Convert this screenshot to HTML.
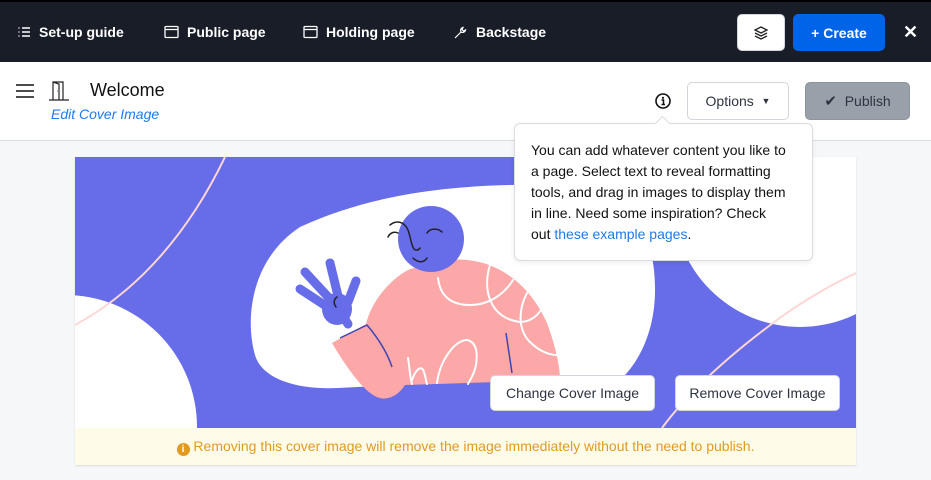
<!DOCTYPE html>
<html><head><meta charset="utf-8">
<style>
*{box-sizing:border-box;margin:0;padding:0}
body{width:931px;height:480px;overflow:hidden;background:#f6f7f9;font-family:"Liberation Sans",sans-serif;position:relative}
.top{position:absolute;left:0;top:0;width:931px;height:62px;background:#181d28;border-top:2px solid #000}
.nav{position:absolute;top:22px;color:#fff;font-size:14px;font-weight:bold;display:flex;align-items:center;gap:8px}
.hdr{position:absolute;left:0;top:62px;width:931px;height:79px;background:#fff;border-bottom:1px solid #d9dce1}
.btn{position:absolute;border-radius:5px;font-size:14px;display:flex;align-items:center;justify-content:center}
.card{position:absolute;left:75px;top:157px;width:781px;height:308px;background:#fff;box-shadow:0 1px 2px rgba(0,0,0,.12);overflow:hidden}
.tip{position:absolute;left:514px;top:123px;width:299px;height:138px;background:#fff;border:1px solid #d9dce1;border-radius:6px;padding:16px 0 0 16px;font-size:14px;line-height:21px;color:#111;white-space:nowrap;box-shadow:0 2px 6px rgba(0,0,0,.06)}
.cb{position:absolute;top:375px;height:36px;background:#fff;border:1px solid #d2d6dc;border-radius:5px;font-size:14px;color:#2d3340;display:flex;align-items:center;justify-content:center}
</style></head><body>
<div class="top">
 <div class="nav" style="left:17px"><svg width="14" height="14" viewBox="0 0 14 14" stroke="#fff" stroke-width="1.4"><path d="M5 3H13M5 7H13M5 11H13M1.5 3h1M1.5 7h1M1.5 11h1"/></svg>Set-up guide</div>
 <div class="nav" style="left:164px"><svg width="15" height="14" viewBox="0 0 15 14" fill="none" stroke="#fff" stroke-width="1.3"><rect x="1" y="1.5" width="13" height="11" rx="1"/><path d="M1 4.5H14"/></svg>Public page</div>
 <div class="nav" style="left:303px"><svg width="15" height="14" viewBox="0 0 15 14" fill="none" stroke="#fff" stroke-width="1.3"><rect x="1" y="1.5" width="13" height="11" rx="1"/><path d="M1 4.5H14"/></svg>Holding page</div>
 <div class="nav" style="left:453px"><svg width="15" height="15" viewBox="0 0 15 15" fill="none" stroke="#fff" stroke-width="1.2"><path d="M2 13L8 7M8 7A3 3 0 0 1 10 2.5L9 4.5 10.5 6 12.5 5A3 3 0 0 1 8 7Z"/></svg>Backstage</div>
 <div class="btn" style="left:737px;top:12px;width:48px;height:37px;background:#fff;border:1px solid #d2d6dc"><svg width="14" height="14" viewBox="0 0 14 14" fill="none" stroke="#222" stroke-width="1.3"><path d="M7 1L13 4 7 7 1 4Z M1 7L7 10 13 7 M1 10L7 13 13 10"/></svg></div>
 <div class="btn" style="left:793px;top:12px;width:92px;height:37px;background:#0064e8;color:#fff;font-weight:bold">+ Create</div>
 <div style="position:absolute;left:903px;top:20px;color:#fff;font-size:18px;font-weight:bold">✕</div>
</div>
<div class="hdr">
 <svg style="position:absolute;left:16px;top:21px" width="18" height="16" viewBox="0 0 18 16" stroke="#333" stroke-width="1.8"><path d="M0 2H18M0 8H18M0 14H18"/></svg>
 <svg style="position:absolute;left:48px;top:18px" width="22" height="22" viewBox="0 0 22 22" fill="none" stroke="#222" stroke-width="1.2"><path d="M1 20H21M5 20V2H15V20M5 2L11 4V20M9 11h.5"/></svg>
 <div style="position:absolute;left:90px;top:18px;font-size:18px;color:#111">Welcome</div>
 <div style="position:absolute;left:51px;top:44px;font-size:14px;color:#1f7aec;font-style:italic">Edit Cover Image</div>
 <svg style="position:absolute;left:655px;top:31px" width="16" height="16" viewBox="0 0 16 16"><circle cx="8" cy="8" r="7" fill="none" stroke="#111" stroke-width="1.6"/><circle cx="8" cy="4.8" r="1.1" fill="#111"/><path d="M6.5 7H8.5V11.5M6.5 11.5H10" stroke="#111" stroke-width="1.5" fill="none"/></svg>
 <div class="btn" style="left:687px;top:20px;width:102px;height:38px;border:1px solid #d2d6dc;color:#2d3340;background:#fff">Options&nbsp;&nbsp;<span style="font-size:9px">▼</span></div>
 <div class="btn" style="left:805px;top:20px;width:105px;height:38px;background:#9aa0aa;color:#2d3340;border:1px solid #8e949e"><span style="font-size:15px">✔</span>&nbsp;&nbsp;Publish</div>
</div>
<div class="card">
<svg width="781" height="271" viewBox="75 157 781 271" style="position:absolute;left:0;top:0">
 <rect x="75" y="157" width="781" height="271" fill="#676ce8"/>
 <circle cx="65" cy="427" r="132" fill="#fff"/>
 <path d="M225 157 C190 230 140 290 75 325" stroke="#ffd6d6" stroke-width="2" fill="none"/>
 <path d="M300 227 C380 190 470 183 560 185 C630 190 655 230 655 290 C655 330 640 360 623 377 L491 380 L338 388 C300 390 262 380 255 355 C245 320 250 260 300 227Z" fill="#fff"/>
 <circle cx="800" cy="200" r="127" fill="#fff"/>
 <path d="M856 273 C820 290 790 310 773 323 C730 355 690 390 662 428" stroke="#ffd6d6" stroke-width="2" fill="none"/>
 <path d="M408 270 C430 262 450 258 467 260 C500 263 530 285 547 323 C555 345 560 365 560 380 L405 385 C398 396 388 400 380 398 C365 395 345 365 332 343 L366 324 C372 300 390 280 408 270Z" fill="#fca8a8"/>
 <path d="M438 278 C440 295 450 305 470 305 C490 305 505 293 513 280 M490 265 C482 290 490 318 520 322 C530 322 537 316 541 310 M527 293 C518 310 518 330 530 342 C538 350 548 355 557 355 M408 358 C410 370 410 378 412 384 M412 380 C416 368 422 365 424 372 C426 378 426 382 427 384 M437 383 C440 360 455 340 467 340 C476 342 478 352 476 365 C474 375 470 380 468 384" stroke="#fff" stroke-width="2" fill="none" stroke-linecap="round"/>
 <path d="M340 338 L367 325 C378 338 387 352 392 367 M506 333 L512 373" stroke="#3d44b8" stroke-width="1.5" fill="none"/>
 <circle cx="431" cy="239" r="33" fill="#676ce8"/>
 <g stroke="#676ce8" stroke-width="9" stroke-linecap="round"><path d="M326 306L300 289M330 299L305 272M338 296L330 263M348 302L356 281M340 312L348 324"/></g>
 <ellipse cx="337" cy="309" rx="15" ry="16" fill="#676ce8"/>
 <path d="M390 225 C396 220 404 221 408 230 C411 238 411 245 414 249 C416 251 419 250 420 248 M388 237 C390 233 394 231 398 233 M427 233 C430 228 438 228 442 232 M413 258 C418 263 424 263 427 258 M336 307 C333 303 334 299 337 297" stroke="#222" stroke-width="1.5" fill="none" stroke-linecap="round"/>
</svg>
<div style="position:absolute;left:0;top:271px;width:781px;height:37px;background:#fefce8;color:#e29a1d;font-size:14px;text-align:center;line-height:37px"><span style="display:inline-block;width:13px;height:13px;border-radius:50%;background:#e29a1d;color:#fff;font-size:10px;line-height:13px;font-weight:bold;vertical-align:-1px">i</span> Removing this cover image will remove the image immediately without the need to publish.</div>
</div>
<div class="cb" style="left:490px;width:165px">Change Cover Image</div>
<div class="cb" style="left:675px;width:165px">Remove Cover Image</div>
<div class="tip">You can add whatever content you like to<br>a page. Select text to reveal formatting<br>tools, and drag in images to display them<br>in line. Need some inspiration? Check<br>out <span style="color:#1f7aec">these example pages</span>.</div>
<div style="position:absolute;left:657px;top:118px;width:11px;height:11px;background:#fff;border-left:1px solid #d9dce1;border-top:1px solid #d9dce1;transform:rotate(45deg)"></div>
</body></html>
